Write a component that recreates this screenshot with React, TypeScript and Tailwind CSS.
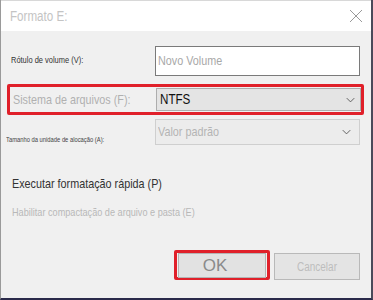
import React from 'react';

const Chevron: React.FC<{ className?: string }> = ({ className }) => (
    <svg viewBox="0 0 12 8" className={className} fill="none" stroke="currentColor" strokeWidth="1.2">
        <path d="M1 1.5 L6 6.5 L11 1.5" />
    </svg>
);

// text in the screenshot is a bit narrower than Arial, so squeeze it horizontally
const Txt: React.FC<{ className?: string; center?: boolean; children: React.ReactNode }> = ({ className = '', center, children }) => (
    <span className={`block w-fit whitespace-nowrap scale-x-[0.83] ${center ? 'origin-center' : 'origin-left'} ${className}`}>{children}</span>
);

const App: React.FC = () => {
    return (
        <div className="w-[373px] h-[300px] bg-[#f0f0f0] flex flex-col border-l border-l-[#9a9a9a] border-r-2 border-r-[#4a4a5a] border-b-2 border-b-[#2a2a4a] font-['Liberation_Sans',Arial,sans-serif] overflow-hidden">
            {/* Title bar */}
            <div className="h-[31px] shrink-0 bg-white flex items-center justify-between pl-[9px] pr-[8px] border-t border-t-[#d8d8d8]">
                <Txt className="text-[14px] text-[#c4c4c4]">Formato E:</Txt>
                <svg viewBox="0 0 14 14" className="w-[14px] h-[14px] text-[#9a9a9a]" stroke="currentColor" strokeWidth="1">
                    <path d="M1 1 L13 13 M13 1 L1 13" />
                </svg>
            </div>

            <div className="flex flex-col pl-[6px] pr-[11px]">
                {/* Volume label */}
                <div className="flex items-center mt-[15px] h-[30px]">
                    <div className="w-[148px] pl-[4px]"><Txt className="text-[9px] text-[#333]">Rótulo de volume (V):</Txt></div>
                    <div className="flex-1 h-[30px] bg-white border border-[#7a7a7a] flex items-center pl-[2px]">
                        <Txt className="text-[13px] text-[#a8a8a8]">Novo Volume</Txt>
                    </div>
                </div>

                {/* File system (highlighted) */}
                <div className="flex items-center mt-[8px] h-[31px] border-[3px] border-[#e0202a] rounded-[2px] -mr-[4px]">
                    <div className="w-[146px] pl-[3px]"><Txt className="text-[13px] text-[#b0b0b0]">Sistema de arquivos (F):</Txt></div>
                    <div className="w-[205px] h-[23px] bg-[#e4e4e4] border border-[#adadad] flex items-center justify-between pl-[3px] pr-[5px]">
                        <Txt className="text-[14px] text-[#111] font-medium">NTFS</Txt>
                        <Chevron className="w-[9px] h-[6px] text-[#555]" />
                    </div>
                </div>

                {/* Allocation unit */}
                <div className="flex items-end mt-[4px] h-[26px]">
                    <div className="w-[149px] -ml-[1px] pb-[1px]"><Txt className="text-[7px] leading-[9px] text-[#444]">Tamanho da unidade de alocação (A):</Txt></div>
                    <div className="flex-1 h-[26px] bg-[#ececec] border border-[#cfcfcf] flex items-center justify-between pl-[2px] pr-[8px]">
                        <Txt className="text-[13px] text-[#b4b4b4]">Valor padrão</Txt>
                        <Chevron className="w-[9px] h-[6px] text-[#555]" />
                    </div>
                </div>

                {/* Options */}
                <div className="mt-[29px] pl-[5px]"><Txt className="text-[13px] text-[#333]">Executar formatação rápida (P)</Txt></div>
                <div className="mt-[10px] pl-[5px]"><Txt className="text-[11px] text-[#b8b8b8]">Habilitar compactação de arquivo e pasta (E)</Txt></div>

                {/* Buttons */}
                <div className="flex justify-end items-start gap-[4px] mt-[30px]">
                    <div className="w-[96px] h-[30px] border-[3px] border-[#e0202a] rounded-[2px] flex items-start justify-end pr-[2px]">
                        <div className="w-[88px] h-[25px] bg-[#e2e2e2] border border-[#b4b4b4] flex items-center justify-center pr-[14px] -mr-[1px]">
                            <span className="text-[17px] text-[#8a8a8a]">OK</span>
                        </div>
                    </div>
                    <div className="w-[86px] h-[27px] bg-[#e4e4e4] border border-[#b9b9b9] flex items-center justify-center mt-[3px]">
                        <Txt center className="text-[12px] text-[#bdbdbd]">Cancelar</Txt>
                    </div>
                </div>
            </div>
        </div>
    );
};

export default App;
